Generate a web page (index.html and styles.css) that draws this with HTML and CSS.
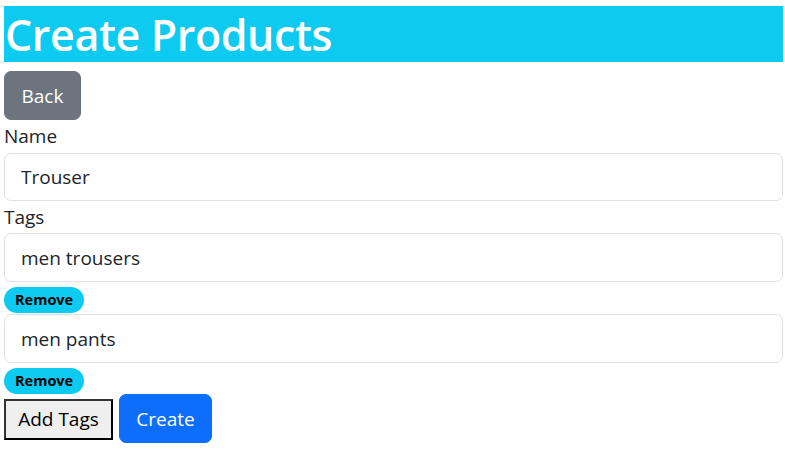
FILE: index.html
```html
<!DOCTYPE html>
<html lang="en">
<head>
    <title>Create Products</title>
    <meta charset="utf-8"/>
    <link rel="stylesheet" href="styles.css">
</head>
<body>
<div id="page">
    <h1 class="title">Create Products</h1>

    <div class="toolbar">
        <button class="btn btn-back">Back</button>
    </div>

    <form class="product-form">
        <label class="field-label" for="name">Name</label>
        <input class="field-input" id="name" type="text" value="Trouser">

        <label class="field-label label-tags" for="tag0">Tags</label>
        <div class="tag-list">
            <div class="tag-row">
                <input class="field-input tag-input" id="tag0" type="text" value="men trousers">
                <span class="badge-remove">Remove</span>
            </div>
            <div class="tag-row">
                <input class="field-input tag-input" id="tag1" type="text" value="men pants">
                <span class="badge-remove">Remove</span>
            </div>
        </div>

        <div class="actions">
            <button type="button" class="btn-addtags">Add Tags</button>
            <button type="button" class="btn btn-create">Create</button>
        </div>
    </form>
</div>
</body>
</html>
```

FILE: styles.css
```css
* {
    box-sizing: border-box;
}

body{
    margin: 6px 2px 0 4px;
    padding: 0;
    font-family: "Open Sans", "Noto Sans", sans-serif;
    color: #212529;
    background: #fff;
}

.title {
    margin: 0;
    height: 56px;
    background-color: #0dcaf0;
    color: #fff;
    font-size: 43px;
    font-weight: 600;
    line-height: 57px;
    letter-spacing: -0.4px;
    padding-left: 1px;
}

.toolbar {
    padding-top: 9px;
}

.btn {
    display: inline-block;
    border: 1px solid transparent;
    border-radius: 7px;
    font-family: inherit;
    font-size: 19px;
    line-height: 29px;
    padding: 10px 16px 8px;
    color: #fff;
    cursor: pointer;
}

.btn-back {
    background-color: #6c757d;
    border-color: #6c757d;
    width: 77px;
    height: 49px;
}

.product-form {
    display: flex;
    flex-direction: column;
}

.field-label {
    font-size: 19px;
    line-height: 32px;
    height: 33px;
}

.label-tags {
    height: 32px;
}

.field-input {
    display: block;
    width: 100%;
    height: 48px;
    border: 1px solid #dee2e6;
    border-radius: 7px;
    padding: 0 16px;
    font-family: inherit;
    font-size: 19px;
    color: #212529;
    background: #fff;
}

.tag-input {
    height: 49px;
}

.tag-row {
    display: flex;
    flex-direction: column;
    align-items: flex-start;
}

.badge-remove {
    margin: 5px 0 1px;
    height: 26px;
    line-height: 26px;
    padding: 0 11px;
    border-radius: 13px;
    background-color: #0dcaf0;
    color: #000;
    font-size: 14.5px;
    font-weight: 700;
}

.tag-row:last-child .badge-remove {
    margin-bottom: 0;
}

.actions {
    display: flex;
    align-items: center;
    gap: 6px;
}

.btn-addtags {
    height: 41px;
    width: 109px;
    margin-top: 1px;
    border: 2px solid #000;
    border-top-color: #333;
    border-left-color: #333;
    background: #efefef;
    font-family: inherit;
    font-size: 19px;
    color: #000;
    padding: 0;
}

.btn-create {
    background-color: #0d6efd;
    border-color: #0d6efd;
    width: 93px;
    height: 49px;
    padding: 10px 0 8px;
}
```
